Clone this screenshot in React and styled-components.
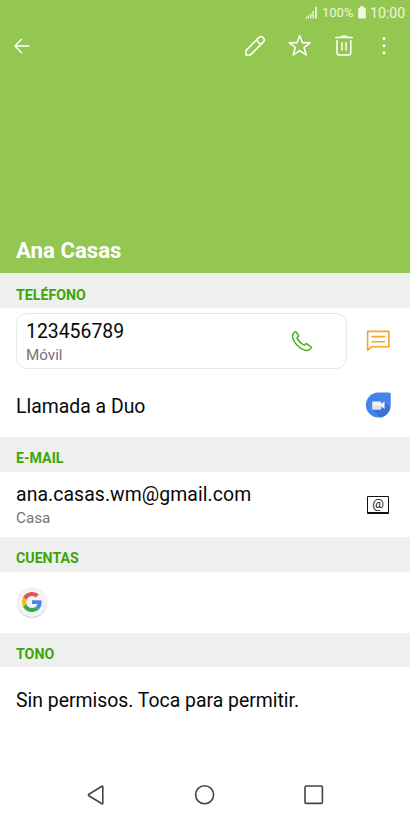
import styled, { createGlobalStyle } from "styled-components";

const GREEN = "#94c652";
const ACCENT = "#3ca607";

const GlobalStyle = createGlobalStyle`
  * {
    box-sizing: border-box;
  }

  body {
    margin: 0;
    background: #fff;
    font-family: Roboto, "Liberation Sans", sans-serif;
  }
`

const Screen = styled.div`
  width: 410px;
  height: 820px;
  display: flex;
  flex-direction: column;
  background: #fff;
  overflow: hidden;
`

const Header = styled.header`
  height: 273px;
  display: flex;
  flex-direction: column;
  flex: none;
  background: ${GREEN};
  color: #fff;
`

const StatusBar = styled.div`
  height: 24px;
  padding: 1px 5px 0 0;
  display: flex;
  align-items: center;
  justify-content: flex-end;
  color: #eef7df;
`

const StatusText = styled.span`
  font-size: ${({ $size }) => $size}px;
  line-height: 16px;
  width: ${({ $width }) => $width}px;
  padding-top: ${({ $drop }) => $drop || 0}px;
  white-space: nowrap;
`

const StatusIcon = styled.svg`
  margin-right: ${({ $gap }) => $gap}px;
  fill: currentColor;
`

const Toolbar = styled.nav`
  height: 44px;
  padding: 0 14px 0 10px;
  display: flex;
  align-items: center;
`

const IconButton = styled.button`
  width: 24px;
  height: 24px;
  padding: 0;
  border: 0;
  margin-left: ${({ $gap }) => $gap || 0}px;
  background: none;
  color: inherit;
  display: flex;
`

const Spacer = styled.div`
  flex: 1;
`

const ContactName = styled.h1`
  margin: auto 0 8px 16px;
  font-size: 22.2px;
  line-height: 30px;
  font-weight: 700;
`

const SectionTitle = styled.h2`
  flex: none;
  margin: 0;
  height: ${({ $height }) => $height || 35}px;
  padding: ${({ $top }) => $top || 7}px 16px 0;
  background: #efefef;
  color: ${ACCENT};
  font-size: 14.2px;
  line-height: 28px;
  font-weight: 700;
`

const Row = styled.div`
  flex: none;
  height: ${({ $height }) => $height}px;
  padding: 0 19px 0 16px;
  display: flex;
  align-items: center;
  justify-content: space-between;
`

const PhoneRow = styled(Row)`
  padding-top: 5px;
  align-items: flex-start;
`

const PhoneCard = styled.div`
  width: 331px;
  height: 56px;
  padding: 0 33px 0 9px;
  border: 1px solid #e8e8e8;
  border-radius: 11px;
  display: flex;
  align-items: center;
  justify-content: space-between;
`

const CardAction = styled.div`
  height: 56px;
  display: flex;
  align-items: center;
`

const TextBlock = styled.div`
  padding-top: 2px;
`

const Primary = styled.div`
  color: #080808;
  font-size: 19.4px;
  line-height: 26px;
  letter-spacing: ${({ $spacing }) => $spacing || 0}px;
`

const Secondary = styled.div`
  color: #747474;
  font-size: 15.2px;
  line-height: 21px;
`

const NavBar = styled.footer`
  height: 50px;
  margin-top: auto;
  padding: 0 84px;
  display: flex;
  align-items: center;
  justify-content: space-between;
  color: #444;
`

const Icon = ({ size = 24, width = 1.6, children }) => (
  <svg
    width={size}
    height={size}
    viewBox={`0 0 ${size} ${size}`}
    fill="none"
    stroke="currentColor"
    strokeWidth={width}
    strokeLinejoin="round"
    strokeLinecap="round"
  >
    {children}
  </svg>
);

const SignalIcon = () => (
  <StatusIcon $gap={4} width="13" height="14" viewBox="0 0 13 14">
    <path d="M0 12.5L2 10.5V12.5ZM2.6 9.5H4V12.5H2.6ZM5 7.5H6.4V12.5H5ZM7.4 4.9H8.8V12.5H7.4ZM10 1.1H11.8V12.5H10Z" />
  </StatusIcon>
);

const BatteryIcon = () => (
  <StatusIcon $gap={4} width="8" height="14" viewBox="0 0 8 14">
    <path d="M2.2 0.3H5.8V1.8H7Q7.8 1.8 7.8 2.6V11.7Q7.8 12.5 7 12.5H1Q0.2 12.5 0.2 11.7V2.6Q0.2 1.8 1 1.8H2.2Z" />
  </StatusIcon>
);

const BackIcon = () => (
  <Icon width={1.4}>
    <path d="M11.5 5.3L5 12L11.5 18.7M5 12H19" />
  </Icon>
);

const PencilIcon = () => (
  <Icon width={1.5}>
    <path d="M2.9 16.6L15.4 3.9C16.8 2.5 18.8 2.4 20.2 3.7C21.5 5 21.4 7 20 8.4L7.4 20.9H2.9Z" />
    <path d="M14.3 5.2C14 8 15.8 9.9 18.6 9.7" />
  </Icon>
);

const StarIcon = () => (
  <Icon width={1.5}>
    <path d="M11.7 1.6L14.4 8.8H22L16 13.5L18.3 21L11.7 16.6L5.1 21L7.4 13.5L1.3 8.8H9Z" />
  </Icon>
);

const TrashIcon = () => (
  <Icon width={1.5}>
    <path d="M3.7 3.4H20.3M9.6 3.2V2.2H14.4V3.2M5 6.4V18.7Q5 20.9 7.2 20.9H16.6Q18.8 20.9 18.8 18.7V6.4M10 8.8V16M14 8.8V16" />
  </Icon>
);

const MoreIcon = () => (
  <svg width="24" height="24" viewBox="0 0 24 24" fill="currentColor">
    <circle cx="12" cy="4.6" r="1.5" />
    <circle cx="12" cy="11.7" r="1.5" />
    <circle cx="12" cy="18.8" r="1.5" />
  </svg>
);

const PhoneIcon = () => (
  <svg width="22" height="22" viewBox="0 0 22 22" fill="none" stroke={ACCENT} strokeWidth="1.3" strokeLinejoin="round">
    <path d="M3.7 1.9C4.2 1.4 4.6 1.5 5 2L7.3 5.1C7.8 5.8 7.7 6.3 7.1 6.8L6.4 7.5C6 7.9 6 8.5 6.4 9C8.1 11.4 9.8 13.3 12.2 14.8C12.8 15.2 13.4 15.2 13.8 14.8L14.5 14C14.9 13.6 15.4 13.6 15.9 13.9L19.9 16.7C20.5 17.1 20.5 17.6 20.1 18.2C18.8 19.9 16.4 21 13.9 20.2C8.1 18.1 4 14 2 8.7C1 6 1.7 3.5 3.7 1.9Z" />
  </svg>
);

const MessageIcon = () => (
  <svg width="26" height="24" viewBox="0 0 26 24" fill="none" stroke="#f5a52c" strokeWidth="1.6" strokeLinejoin="round">
    <path d="M2.6 2.4H23.9V17.8H6.4L2.6 21.3Z" />
    <path d="M7 7.6H19.6M7 12.7H19.6" strokeLinecap="round" />
  </svg>
);

const DuoIcon = () => (
  <svg width="26" height="28" viewBox="0 0 26 28">
    <path d="M13.3 0.5H23.9Q25.7 0.5 25.7 2.3V13.1A12.4 12.5 0 1 1 13.3 0.5Z" fill="#4283ec" />
    <path d="M19.7 10L25.4 15.7C24.3 20.8 20.4 24.6 15.4 25.4L7.6 17.3Z" fill="#3972d6" />
    <path d="M8 9.5H15.4Q16.2 9.5 16.2 10.3V12L19.6 9.6V17.1L16.2 14.6V16.6Q16.2 17.4 15.4 17.4H8Q7.2 17.4 7.2 16.6V10.3Q7.2 9.5 8 9.5Z" fill="#f1f3f8" />
    <path d="M7.2 13.4H16.2V16.6Q16.2 17.4 15.4 17.4H8Q7.2 17.4 7.2 16.6Z" fill="#dce2ee" />
  </svg>
);

const EmailIcon = styled.span`
  width: 22px;
  height: 18px;
  margin-right: 2px;
  border: solid #111;
  border-width: 1px 1px 2px;
  border-radius: 1px;
  display: flex;
  align-items: center;
  justify-content: center;
  color: #111;
  font-size: 13px;
  line-height: 14px;

  &::before {
    content: "@";
  }
`

const GoogleBadge = styled.div`
  width: 30px;
  height: 30px;
  margin: 0 0 2px 1px;
  border-radius: 50%;
  background: #f2f2f2;
  box-shadow: 0 1px 1px rgba(0, 0, 0, 0.2);
  display: flex;
  align-items: center;
  justify-content: center;
`

const GoogleIcon = () => (
  <svg width="20" height="20" viewBox="0 0 48 48">
    <path fill="#e2574c" d="M24 9.5c3.54 0 6.71 1.22 9.21 3.6l6.85-6.85C35.9 2.38 30.47 0 24 0 14.62 0 6.51 5.38 2.56 13.22l7.98 6.19C12.43 13.72 17.74 9.5 24 9.5z" />
    <path fill="#4a86e8" d="M46.98 24.55c0-1.57-.15-3.09-.38-4.55H24v9.02h12.94c-.58 2.96-2.26 5.48-4.78 7.18l7.73 6c4.51-4.18 7.09-10.36 7.09-17.65z" />
    <path fill="#fbbc05" d="M10.53 28.59c-.48-1.45-.76-2.99-.76-4.59s.27-3.14.76-4.59l-7.98-6.19C.92 16.46 0 20.12 0 24c0 3.88.92 7.54 2.56 10.78l7.97-6.19z" />
    <path fill="#34a853" d="M24 48c6.48 0 11.93-2.13 15.89-5.81l-7.73-6c-2.15 1.45-4.92 2.3-8.16 2.3-6.26 0-11.57-4.22-13.47-9.91l-7.98 6.19C6.51 42.62 14.62 48 24 48z" />
  </svg>
);

const App = () => {
  return (
    <Screen>
      <GlobalStyle />
      <Header>
        <StatusBar>
          <SignalIcon />
          <StatusText $size={13} $width={36}>100%</StatusText>
          <BatteryIcon />
          <StatusText $size={14.1} $width={35} $drop={1}>10:00</StatusText>
        </StatusBar>
        <Toolbar>
          <IconButton><BackIcon /></IconButton>
          <Spacer />
          <IconButton><PencilIcon /></IconButton>
          <IconButton $gap={21}><StarIcon /></IconButton>
          <IconButton $gap={20}><TrashIcon /></IconButton>
          <IconButton $gap={16}><MoreIcon /></IconButton>
        </Toolbar>
        <ContactName>Ana Casas</ContactName>
      </Header>

      <SectionTitle $top={8}>TELÉFONO</SectionTitle>
      <PhoneRow $height={66}>
        <PhoneCard>
          <TextBlock>
            <Primary>123456789</Primary>
            <Secondary>Móvil</Secondary>
          </TextBlock>
          <PhoneIcon />
        </PhoneCard>
        <CardAction><MessageIcon /></CardAction>
      </PhoneRow>
      <Row $height={63}>
        <TextBlock>
          <Primary>Llamada a Duo</Primary>
        </TextBlock>
        <DuoIcon />
      </Row>

      <SectionTitle>E-MAIL</SectionTitle>
      <Row $height={65}>
        <TextBlock>
          <Primary $spacing={0.08}>ana.casas.wm@gmail.com</Primary>
          <Secondary>Casa</Secondary>
        </TextBlock>
        <EmailIcon />
      </Row>

      <SectionTitle>CUENTAS</SectionTitle>
      <Row $height={61}>
        <GoogleBadge><GoogleIcon /></GoogleBadge>
      </Row>

      <SectionTitle $height={34}>TONO</SectionTitle>
      <Row $height={66}>
        <TextBlock>
          <Primary>Sin permisos. Toca para permitir.</Primary>
        </TextBlock>
      </Row>

      <NavBar>
        <Icon width={1.6}>
          <path d="M18.8 3.7V20.3Q18.8 21.3 17.9 20.8L4.9 12.8Q4 12 4.9 11.2L17.9 3.2Q18.8 2.7 18.8 3.7Z" />
        </Icon>
        <Icon width={1.6}>
          <circle cx="11.6" cy="11.7" r="9" />
        </Icon>
        <Icon width={1.6}>
          <rect x="3" y="3" width="17.4" height="17.4" rx="1.2" />
        </Icon>
      </NavBar>
    </Screen>
  );
};

export default App;
